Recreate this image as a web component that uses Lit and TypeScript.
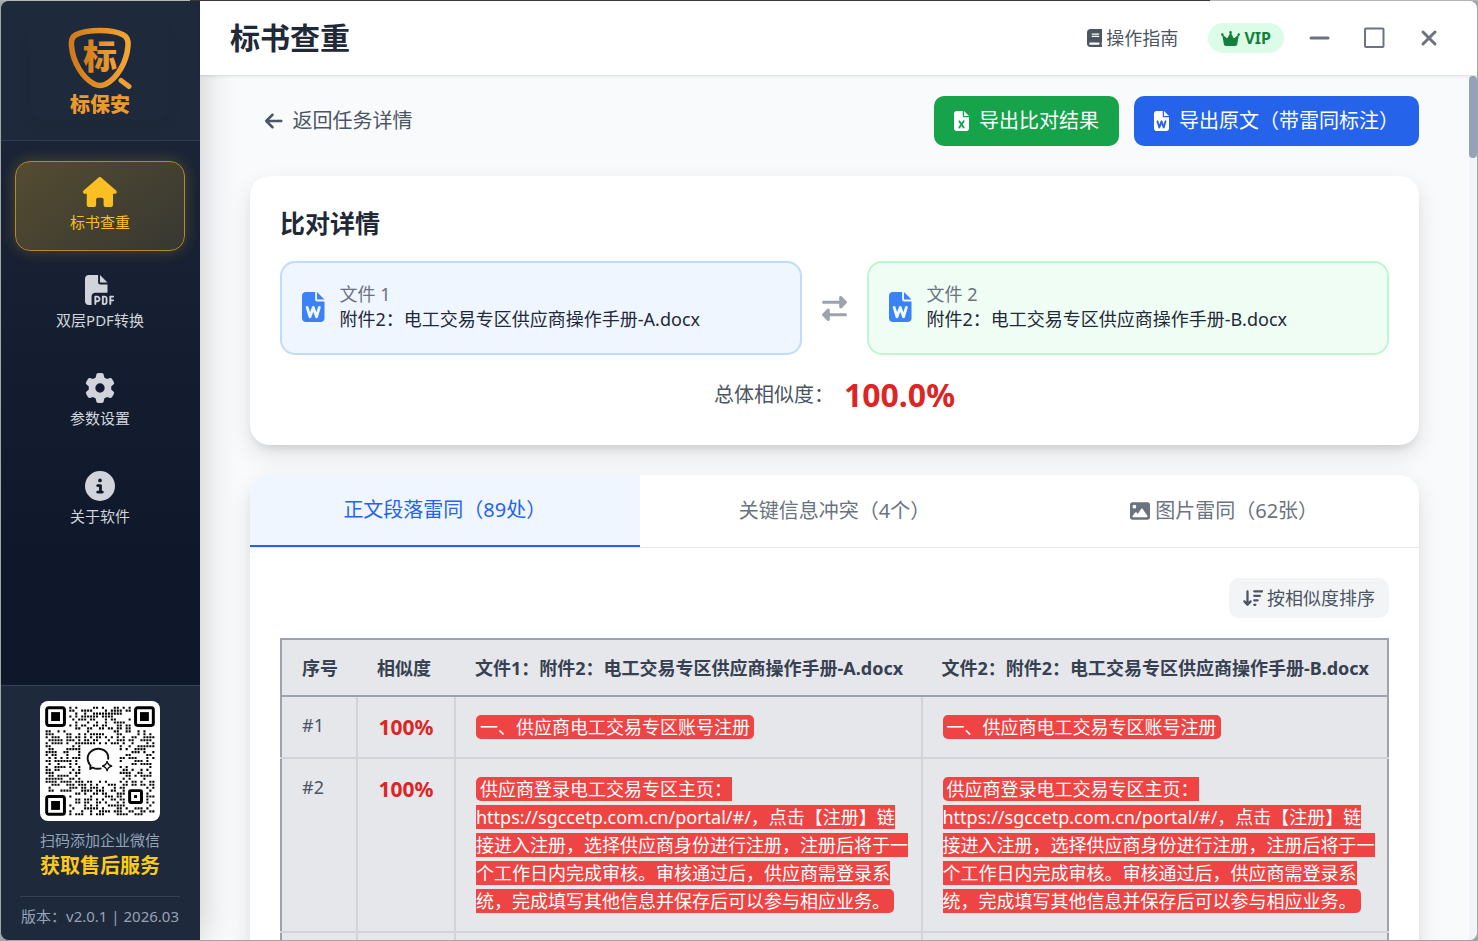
import { LitElement, html, css, svg } from "lit";
import { customElement, state } from "lit/decorators.js";

interface Glyph {
  box: string;
  d: string;
}

const FILE_BASE =
  "M64 0C28.7 0 0 28.7 0 64V448c0 35.3 28.7 64 64 64H320c35.3 0 64-28.7 64-64V160H256c-17.7 0-32-14.3-32-32V0H64zM256 0V128H384L256 0z";

const ICONS: Record<string, Glyph> = {
  home: {
    box: "0 0 576 512",
    d: "M575.8 255.5c0 18-15 32.1-32 32.1h-32l.7 160.2c0 2.7-.2 5.4-.5 8.1V472c0 22.1-17.9 40-40 40H456c-1.1 0-2.2 0-3.3-.1c-1.4 .1-2.8 .1-4.2 .1H416 392c-22.1 0-40-17.9-40-40V448 384c0-17.7-14.3-32-32-32H256c-17.7 0-32 14.3-32 32v64 24c0 22.1-17.9 40-40 40H160 128.1c-1.5 0-3-.1-4.5-.2c-1.2 .1-2.4 .2-3.6 .2H104c-22.1 0-40-17.9-40-40V360c0-.9 0-1.9 .1-2.8V287.6H32c-18 0-32-14-32-32.1c0-9 3-17 10-24L266.4 8c7-7 15-8 22-8s15 2 21 7L564.8 231.5c8 7 12 15 11 24z",
  },
  pdf: {
    box: "0 0 512 512",
    d: "M0 64C0 28.7 28.7 0 64 0H224V128c0 17.7 14.3 32 32 32H384V304H176c-35.3 0-64 28.7-64 64V512H64c-35.3 0-64-28.7-64-64V64zm384 64H256V0L384 128zM176 352h32c30.9 0 56 25.1 56 56s-25.1 56-56 56H192v32c0 8.8-7.2 16-16 16s-16-7.2-16-16V448 368c0-8.8 7.2-16 16-16zm32 80c13.3 0 24-10.7 24-24s-10.7-24-24-24H192v48h16zm96-80h32c26.5 0 48 21.5 48 48v64c0 26.5-21.5 48-48 48H304c-8.8 0-16-7.2-16-16V368c0-8.8 7.2-16 16-16zm32 128c8.8 0 16-7.2 16-16V400c0-8.8-7.2-16-16-16H320v96h16zm80-112c0-8.8 7.2-16 16-16h48c8.8 0 16 7.2 16 16s-7.2 16-16 16H448v32h32c8.8 0 16 7.2 16 16s-7.2 16-16 16H448v48c0 8.8-7.2 16-16 16s-16-7.2-16-16V432 368z",
  },
  gear: {
    box: "0 0 512 512",
    d: "M495.9 166.6c3.2 8.7 .5 18.4-6.4 24.6l-43.3 39.4c1.1 8.3 1.7 16.8 1.7 25.4s-.6 17.1-1.7 25.4l43.3 39.4c6.9 6.2 9.6 15.9 6.4 24.6c-4.4 11.9-9.7 23.3-15.8 34.3l-4.7 8.1c-6.6 11-14 21.4-22.1 31.2c-5.9 7.2-15.7 9.6-24.5 6.8l-55.7-17.7c-13.4 10.3-28.2 18.9-44 25.4l-12.5 57.1c-2 9.1-9 16.3-18.2 17.8c-13.8 2.3-28 3.5-42.5 3.5s-28.7-1.2-42.5-3.5c-9.2-1.5-16.2-8.7-18.2-17.8l-12.5-57.1c-15.8-6.5-30.6-15.1-44-25.4L83.1 425.9c-8.8 2.8-18.6 .3-24.5-6.8c-8.1-9.8-15.5-20.2-22.1-31.2l-4.7-8.1c-6.1-11-11.4-22.4-15.8-34.3c-3.2-8.7-.5-18.4 6.4-24.6l43.3-39.4C64.6 273.1 64 264.6 64 256s.6-17.1 1.7-25.4L22.4 191.2c-6.9-6.2-9.6-15.9-6.4-24.6c4.4-11.9 9.7-23.3 15.8-34.3l4.7-8.1c6.6-11 14-21.4 22.1-31.2c5.9-7.2 15.7-9.6 24.5-6.8l55.7 17.7c13.4-10.3 28.2-18.9 44-25.4l12.5-57.1c2-9.1 9-16.3 18.2-17.8C227.3 1.2 241.5 0 256 0s28.7 1.2 42.5 3.5c9.2 1.5 16.2 8.7 18.2 17.8l12.5 57.1c15.8 6.5 30.6 15.1 44 25.4l55.7-17.7c8.8-2.8 18.6-.3 24.5 6.8c8.1 9.8 15.5 20.2 22.1 31.2l4.7 8.1c6.1 11 11.4 22.4 15.8 34.3zM256 336a80 80 0 1 0 0-160 80 80 0 1 0 0 160z",
  },
  info: {
    box: "0 0 512 512",
    d: "M256 512A256 256 0 1 0 256 0a256 256 0 1 0 0 512zM216 336h24V272H216c-13.3 0-24-10.7-24-24s10.7-24 24-24h48c13.3 0 24 10.7 24 24v88h8c13.3 0 24 10.7 24 24s-10.7 24-24 24H216c-13.3 0-24-10.7-24-24s10.7-24 24-24zm40-208a32 32 0 1 1 0 64 32 32 0 1 1 0-64z",
  },
  book: {
    box: "0 0 448 512",
    d: "M96 0C43 0 0 43 0 96V416c0 53 43 96 96 96H384h32c17.7 0 32-14.3 32-32s-14.3-32-32-32V384c17.7 0 32-14.3 32-32V32c0-17.7-14.3-32-32-32H384 96zm0 384H352v64H96c-17.7 0-32-14.3-32-32s14.3-32 32-32zm32-240c0-8.8 7.2-16 16-16H336c8.8 0 16 7.2 16 16s-7.2 16-16 16H144c-8.8 0-16-7.2-16-16zm16 48H336c8.8 0 16 7.2 16 16s-7.2 16-16 16H144c-8.8 0-16-7.2-16-16s7.2-16 16-16z",
  },
  crown: {
    box: "0 0 576 512",
    d: "M309 106c11.4-7 19-19.7 19-34c0-22.1-17.9-40-40-40s-40 17.9-40 40c0 14.4 7.6 27 19 34L209.7 220.6c-9.1 18.2-32.7 23.4-48.6 10.7L72 160c5-6.7 8-15 8-24c0-22.1-17.9-40-40-40S0 113.9 0 136s17.9 40 40 40c.2 0 .5 0 .7 0L86.4 427.4c5.5 30.4 32 52.6 63 52.6H426.6c30.9 0 57.4-22.1 63-52.6L535.3 176c.2 0 .5 0 .7 0c22.1 0 40-17.9 40-40s-17.9-40-40-40s-40 17.9-40 40c0 9 3 17.3 8 24l-89.1 71.3c-15.9 12.7-39.5 7.5-48.6-10.7L309 106z",
  },
  back: {
    box: "0 0 448 512",
    d: "M9.4 233.4c-12.5 12.5-12.5 32.8 0 45.3l160 160c12.5 12.5 32.8 12.5 45.3 0s12.5-32.8 0-45.3L109.2 288 416 288c17.7 0 32-14.3 32-32s-14.3-32-32-32l-306.7 0L214.6 118.6c12.5-12.5 12.5-32.8 0-45.3s-32.8-12.5-45.3 0l-160 160z",
  },
  word: {
    box: "0 0 384 512",
    d:
      FILE_BASE +
      "M111 257.1l26.8 89.2 31.6-90.3c3.4-9.6 12.5-16.1 22.7-16.1s19.3 6.4 22.7 16.1l31.6 90.3L273 257.1c3.8-12.7 17.2-19.9 29.9-16.1s19.9 17.2 16.1 29.9l-48 160c-3 10-12 16.9-22.4 17.1s-19.8-6.2-23.2-16.1L192 336.6l-33.3 95.3c-3.4 9.8-12.8 16.3-23.2 16.1s-19.5-7.1-22.4-17.1l-48-160c-3.8-12.7 3.4-26.1 16.1-29.9s26.1 3.4 29.9 16.1z",
  },
  excel: {
    box: "0 0 384 512",
    d:
      FILE_BASE +
      "M155.7 250.2L192 302.1l36.3-51.9c7.6-10.9 22.6-13.5 33.4-5.9s13.5 22.6 5.9 33.4L221.3 344l46.4 66.2c7.6 10.9 5 25.8-5.9 33.4s-25.8 5-33.4-5.9L192 385.8l-36.3 51.9c-7.6 10.9-22.6 13.5-33.4 5.9s-13.5-22.6-5.9-33.4L162.7 344l-46.4-66.2c-7.6-10.9-5-25.8 5.9-33.4s25.8-5 33.4 5.9z",
  },
  swap: {
    box: "0 0 512 512",
    d: "M32 96l320 0V32c0-12.9 7.8-24.6 19.8-29.6s25.7-2.2 34.9 6.9l96 96c6 6 9.4 14.1 9.4 22.6s-3.4 16.6-9.4 22.6l-96 96c-9.2 9.2-22.9 11.9-34.9 6.9s-19.8-16.6-19.8-29.6V160L32 160c-17.7 0-32-14.3-32-32s14.3-32 32-32zM480 352c17.7 0 32 14.3 32 32s-14.3 32-32 32H160v64c0 12.9-7.8 24.6-19.8 29.6s-25.7 2.2-34.9-6.9l-96-96c-6-6-9.4-14.1-9.4-22.6s3.4-16.6 9.4-22.6l96-96c9.2-9.2 22.9-11.9 34.9-6.9s19.8 16.6 19.8 29.6l0 64H480z",
  },
  image: {
    box: "0 0 512 512",
    d: "M0 96C0 60.7 28.7 32 64 32H448c35.3 0 64 28.7 64 64V416c0 35.3-28.7 64-64 64H64c-35.3 0-64-28.7-64-64V96zM323.8 202.5c-4.5-6.6-11.9-10.5-19.8-10.5s-15.4 3.9-19.8 10.5l-87 127.6L170.7 297c-4.6-5.7-11.5-9-18.7-9s-14.2 3.3-18.7 9l-64 80c-5.8 7.2-6.9 17.1-2.9 25.4s12.4 13.6 21.6 13.6h96 32H424c8.9 0 17.1-4.9 21.2-12.8s3.6-17.4-1.4-24.7l-120-176zM112 192a48 48 0 1 0 0-96 48 48 0 1 0 0 96z",
  },
  sort: {
    box: "0 0 576 512",
    d: "M151.6 469.6C145.5 476.2 137 480 128 480s-17.5-3.8-23.6-10.4l-88-96c-11.9-13-11.1-33.3 2-45.2s33.3-11.1 45.2 2L96 365.7V64c0-17.7 14.3-32 32-32s32 14.3 32 32V365.7l32.4-35.4c11.9-13 32.2-13.9 45.2-2s13.9 32.2 2 45.2l-88 96zM320 480c-17.7 0-32-14.3-32-32s14.3-32 32-32h32c17.7 0 32 14.3 32 32s-14.3 32-32 32H320zm0-128c-17.7 0-32-14.3-32-32s14.3-32 32-32h96c17.7 0 32 14.3 32 32s-14.3 32-32 32H320zm0-128c-17.7 0-32-14.3-32-32s14.3-32 32-32H480c17.7 0 32 14.3 32 32s-14.3 32-32 32H320zm0-128c-17.7 0-32-14.3-32-32s14.3-32 32-32H544c17.7 0 32 14.3 32 32s-14.3 32-32 32H320z",
  },
};

const icon = (name: string, size: string) =>
  html`<svg class="icon ${size}" viewBox=${ICONS[name].box} aria-hidden="true"><path d=${ICONS[name].d}></path></svg>`;

const NAV = [
  { id: "check", icon: "home", label: "标书查重" },
  { id: "pdf", icon: "pdf", label: "双层PDF转换" },
  { id: "settings", icon: "gear", label: "参数设置" },
  { id: "about", icon: "info", label: "关于软件" },
];

const TABS = [
  { id: "text", icon: "", label: "正文段落雷同（89处）" },
  { id: "keys", icon: "", label: "关键信息冲突（4个）" },
  { id: "images", icon: "image", label: "图片雷同（62张）" },
];

const FILE_A = "附件2：电工交易专区供应商操作手册-A.docx";
const FILE_B = "附件2：电工交易专区供应商操作手册-B.docx";

const ROWS = [
  { no: "#1", score: "100%", text: "一、供应商电工交易专区账号注册" },
  {
    no: "#2",
    score: "100%",
    text: "供应商登录电工交易专区主页：https://sgccetp.com.cn/portal/#/，点击【注册】链接进入注册，选择供应商身份进行注册，注册后将于一个工作日内完成审核。审核通过后，供应商需登录系统，完成填写其他信息并保存后可以参与相应业务。",
  },
];

/* Module grid of the contact code: 37 x 37, finders in three corners, logo area left free. */
const QR_SIZE = 37;
const inBox = (x: number, y: number, x0: number, y0: number, x1: number, y1: number) =>
  x >= x0 && x <= x1 && y >= y0 && y <= y1;

const qrDots = () => {
  let seed = 20260301;
  const dots: string[] = [];
  for (let y = 0; y < QR_SIZE; y++) {
    for (let x = 0; x < QR_SIZE; x++) {
      seed = (seed * 1103515245 + 12345) % 2147483648;
      const on = (seed >> 12) % 100 < 50;
      const reserved =
        inBox(x, y, 0, 0, 7, 7) ||
        inBox(x, y, 29, 0, 36, 7) ||
        inBox(x, y, 0, 29, 7, 36) ||
        inBox(x, y, 27, 27, 33, 33) ||
        inBox(x, y, 12, 13, 24, 24);
      if (on && !reserved) dots.push(`M${x + 0.15} ${y + 0.15}h.7v.7h-.7z`);
    }
  }
  return dots.join("");
};
const QR_DOTS = qrDots();

const finder = (x: number, y: number) => svg`
  <rect x=${x + 0.5} y=${y + 0.5} width="6" height="6" rx="0.7" fill="none" stroke="#000"></rect>
  <rect x=${x + 2} y=${y + 2} width="3" height="3"></rect>`;

@customElement("app-root")
export class AppRoot extends LitElement {
  @state() private page = "check";
  @state() private tab = "text";

  static styles = css`
    :host {
      display: block;
      height: 100vh;
      font-family: "Noto Sans", "Noto Sans CJK SC", sans-serif;
      font-size: 20px;
      line-height: 30px;
      color: #1f2937;
    }
    * {
      box-sizing: border-box;
    }
    button {
      font: inherit;
      color: inherit;
      background: none;
      border: 0;
      padding: 0;
      cursor: pointer;
    }
    h1,
    h2,
    p {
      margin: 0;
    }
    .icon {
      display: block;
      flex: none;
      fill: currentColor;
      width: auto;
    }
    .s17 { height: 17px; }
    .s18 { height: 18px; }
    .s20 { height: 20px; }
    .s25 { height: 25px; }
    .s30 { height: 30px; }

    .desktop {
      height: 100%;
      padding: 1px;
      background: linear-gradient(90deg, #b4b7b3 190px, #3a3838 190px, #3a3838 1210px, #b4b4b4 1210px) top / 100% 1px no-repeat, #a3a6a8;
    }
    .window {
      height: 100%;
      display: flex;
      border-radius: 8px;
      overflow: hidden;
      background: #f8fafc;
    }

    .sidebar {
      flex: none;
      width: 199px;
      display: flex;
      flex-direction: column;
      background: linear-gradient(180deg, #1e293b 0%, #0f172a 60%, #0f172a 100%);
      box-shadow: 5px 0 30px rgba(0, 0, 0, 0.16);
      z-index: 1;
    }
    .brand {
      height: 140px;
      padding: 19px 31px 20px 29px;
      background: #1e293b;
      border-bottom: 1px solid #2f3d50;
    }
    .brand-box {
      height: 100px;
      display: flex;
      justify-content: center;
      border-radius: 15px;
      box-shadow: 0 8px 14px rgba(0, 0, 0, 0.06);
    }
    .brand svg {
      width: 80px;
      height: 100px;
    }
    .brand text {
      font-weight: 900;
      text-anchor: middle;
    }
    .nav {
      flex: 1;
      display: flex;
      flex-direction: column;
      gap: 8px;
      padding: 20px 15px 20px 14px;
    }
    .nav-item {
      height: 90px;
      display: flex;
      flex-direction: column;
      align-items: center;
      padding: 15px 0;
      gap: 5px;
      border: 1px solid transparent;
      border-radius: 15px;
      font-size: 15px;
      line-height: 20px;
      color: #d1d5db;
    }
    .nav-item.active {
      color: #fbbf24;
      border-color: #b1882a;
      background: linear-gradient(135deg, rgba(251, 191, 36, 0.26), rgba(251, 191, 36, 0.14));
      box-shadow: 0 0 15px rgba(251, 191, 36, 0.24);
    }
    .contact {
      display: flex;
      flex-direction: column;
      align-items: center;
      padding: 15px 20px 13px 19px;
      background: #1e293b;
      border-top: 1px solid #334155;
      font-size: 15px;
      line-height: 22px;
      color: #94a3b8;
      text-align: center;
    }
    .qr {
      width: 120px;
      height: 120px;
      padding: 4px;
      border-radius: 8px;
      background: #fff;
      margin-bottom: 8px;
    }
    .qr svg {
      display: block;
      width: 100%;
      height: 100%;
    }
    .service {
      font-size: 20px;
      line-height: 30px;
      font-weight: 700;
      color: #facc15;
      margin-bottom: 15px;
    }
    .version {
      align-self: stretch;
      border-top: 1px solid #334155;
      padding-top: 8px;
      white-space: nowrap;
    }

    .main {
      flex: 1;
      min-width: 0;
      display: flex;
      flex-direction: column;
    }
    .topbar {
      flex: none;
      height: 74px;
      display: flex;
      align-items: center;
      padding: 0 31px 0 30px;
      background: #fff;
      box-shadow: 0 1px 3px rgba(0, 0, 0, 0.12);
      z-index: 2;
    }
    .topbar h1 {
      flex: 1;
      font-size: 30px;
      line-height: 40px;
      font-weight: 700;
    }
    .guide {
      display: flex;
      align-items: center;
      gap: 4px;
      font-size: 18px;
      color: #4b5563;
      text-decoration: none;
    }
    .vip {
      display: flex;
      align-items: center;
      gap: 4px;
      height: 30px;
      margin: 0 17px 0 30px;
      padding: 0 13px;
      border-radius: 15px;
      background: #dcfce7;
      color: #15803d;
      font-size: 16px;
      font-weight: 700;
    }
    .win-controls {
      display: flex;
      gap: 20px;
    }
    .win-controls button {
      width: 35px;
      height: 35px;
      display: grid;
      place-items: center;
    }
    .win-controls svg {
      width: 24px;
      height: 24px;
      fill: none;
      stroke: #6b7280;
      stroke-linecap: round;
    }

    .body {
      flex: 1;
      min-height: 0;
      display: flex;
    }
    .scroll {
      flex: 1;
      min-width: 0;
      overflow: hidden;
      display: flex;
      flex-direction: column;
      gap: 30px;
      padding: 21px 50px 0;
    }
    .scroll > * {
      flex: none;
    }
    .track {
      width: 8px;
      padding-top: 1px;
      background: #f1f5f9;
    }
    .thumb {
      height: 82px;
      border-radius: 5px;
      background: #94a3b8;
    }

    .actions {
      display: flex;
      align-items: center;
      gap: 15px;
    }
    .back {
      display: flex;
      align-items: center;
      gap: 10px;
      margin-right: auto;
      padding: 10px 15px;
      color: #4b5563;
    }
    .export {
      display: flex;
      align-items: center;
      gap: 10px;
      height: 50px;
      padding: 0 20px;
      border-radius: 10px;
      color: #fff;
      white-space: nowrap;
    }
    .export.green {
      background: #16a34a;
    }
    .export.blue {
      background: #2563eb;
    }

    .card {
      border-radius: 20px;
      background: #fff;
      box-shadow: 0 10px 25px rgba(0, 0, 0, 0.1), 0 6px 10px -4px rgba(0, 0, 0, 0.12);
    }
    .summary {
      padding: 30px;
    }
    .summary h2 {
      font-size: 25px;
      line-height: 35px;
      font-weight: 700;
      margin-bottom: 20px;
    }
    .pair {
      display: grid;
      grid-template-columns: 1fr auto 1fr;
      align-items: center;
      gap: 20px;
      margin-bottom: 20px;
    }
    .pair > .icon {
      color: #9ca3af;
    }
    .file {
      display: flex;
      align-items: center;
      gap: 15px;
      min-width: 0;
      padding: 19px 20px 21px;
      border: 2px solid #bfdbfe;
      border-radius: 15px;
      background: #eff6ff;
      font-size: 18px;
      line-height: 25px;
    }
    .file.second {
      border-color: #bbf7d0;
      background: #f0fdf4;
    }
    .file .icon {
      color: #3b82f6;
    }
    .file-label {
      color: #6b7280;
    }
    .overall {
      display: flex;
      justify-content: center;
      align-items: center;
      gap: 10px;
      color: #4b5563;
      line-height: 40px;
    }
    .overall strong {
      font-size: 32px;
      color: #dc2626;
    }

    .details {
      overflow: hidden;
    }
    .tabs {
      display: grid;
      grid-template-columns: repeat(3, 1fr);
      border-bottom: 1px solid #e5e7eb;
    }
    .tab {
      display: flex;
      align-items: center;
      justify-content: center;
      gap: 5px;
      height: 72px;
      color: #6b7280;
    }
    .tab.active {
      color: #2563eb;
      background: #eff6ff;
      border-bottom: 2px solid #2563eb;
    }
    .panel {
      display: flex;
      flex-direction: column;
      gap: 20px;
      padding: 30px;
    }
    .sort {
      align-self: flex-end;
      display: flex;
      align-items: center;
      gap: 4px;
      height: 40px;
      padding: 0 14px;
      border-radius: 10px;
      background: #f3f4f6;
      color: #4b5563;
      font-size: 18px;
    }
    table {
      width: 100%;
      table-layout: fixed;
      border-collapse: collapse;
      border: 2px solid #9ca3af;
      background: #e5e7eb;
      font-size: 18px;
      line-height: 24px;
    }
    .col-no {
      width: 76px;
    }
    .col-score {
      width: 98px;
    }
    th {
      padding: 16px 0 15px 20px;
      text-align: left;
      font-weight: 700;
      color: #374151;
      white-space: nowrap;
      border-bottom: 2px solid #9ca3af;
    }
    td {
      padding: 16px 10px 16px 20px;
      vertical-align: top;
      border-bottom: 2px solid #d1d5db;
      border-right: 2px solid #d1d5db;
    }
    td:last-child {
      border-right-color: #9ca3af;
    }
    .no {
      color: #4b5563;
    }
    .score {
      padding: 16px 0;
      text-align: center;
      font-size: 21px;
      line-height: 28px;
      font-weight: 700;
      color: #dc2626;
    }
    .para {
      line-height: 28px;
    }
    .mark {
      padding: 0 4px;
      border-radius: 5px;
      background: #ef4444;
      color: #fff;
    }
  `;

  private logo() {
    return html`<svg viewBox="0 0 80 100" role="img" aria-label="标保安">
      <defs>
        <linearGradient id="gold" x1="0" y1="0" x2="1" y2="0">
          <stop offset="0" stop-color="#cf7a1c"></stop>
          <stop offset="1" stop-color="#f2a533"></stop>
        </linearGradient>
      </defs>
      <path
        d="M40 10.500C50 10.500 58 12 63.500 15C67 17 68.500 21 68 26C66.500 43 57 58 46 64C42 66 38 66 34 64C23 58 13 43 11.500 26C11 21 12 17 15.500 15C21 12 30 10.500 40 10.500Z"
        fill="none" stroke="url(#gold)" stroke-width="5.500"></path>
      <path d="M61 60.500L69 66.500" stroke="#eda033" stroke-width="5" stroke-linecap="round"></path>
      <text x="40" y="49" font-size="34" fill="url(#gold)">标</text>
      <text x="40" y="92" font-size="20" fill="#eb9a2e">标保安</text>
    </svg>`;
  }

  private qr() {
    return html`<svg viewBox="-0.400 -0.400 37.800 37.800" role="img" aria-label="企业微信">
      <path d=${QR_DOTS}></path>
      ${finder(0, 0)} ${finder(30, 0)} ${finder(0, 30)}
      <rect x="28.500" y="28.500" width="4" height="4" rx="0.300" fill="none" stroke="#000"></rect>
      <rect x="30" y="30" width="1" height="1"></rect>
      <path d="M19 21C17.800 21.300 16.800 21.100 16 20.700L15.200 21.200L15.300 20C13.900 18.500 14 16.300 15.700 15.100C17.800 13.700 20.600 14.500 21.200 16.600C21.300 17 21.300 17.500 21.200 18"
        fill="none" stroke="#111" stroke-width="0.650" stroke-linejoin="round"></path>
      <path d="M20.900 18.500Q21.100 20 22.600 20.200Q21.100 20.400 20.900 21.900Q20.700 20.400 19.200 20.200Q20.700 20 20.900 18.500Z"
        fill="none" stroke="#111" stroke-width="0.450"></path>
    </svg>`;
  }

  private sidebar() {
    return html`<aside class="sidebar">
      <div class="brand"><div class="brand-box">${this.logo()}</div></div>
      <nav class="nav">
        ${NAV.map(
          (item) => html`<button
            class="nav-item ${this.page === item.id ? "active" : ""}"
            @click=${() => (this.page = item.id)}
          >
            ${icon(item.icon, "s30")}<span>${item.label}</span>
          </button>`
        )}
      </nav>
      <footer class="contact">
        <div class="qr">${this.qr()}</div>
        <p>扫码添加企业微信</p>
        <p class="service">获取售后服务</p>
        <p class="version">版本：v2.0.1 | 2026.03</p>
      </footer>
    </aside>`;
  }

  private topbar() {
    return html`<header class="topbar">
      <h1>标书查重</h1>
      <a class="guide" href="#guide">${icon("book", "s18")}<span>操作指南</span></a>
      <span class="vip">${icon("crown", "s17")}<span>VIP</span></span>
      <div class="win-controls">
        <button aria-label="最小化">
          <svg viewBox="0 0 24 24"><path d="M4 12H21" stroke-width="3"></path></svg>
        </button>
        <button aria-label="最大化">
          <svg viewBox="0 0 24 24"><rect x="3" y="2.500" width="18.500" height="18.500" rx="1" stroke-width="2"></rect></svg>
        </button>
        <button aria-label="关闭">
          <svg viewBox="0 0 24 24"><path d="M6 6L18 18M18 6L6 18" stroke-width="3"></path></svg>
        </button>
      </div>
    </header>`;
  }

  private summary() {
    return html`<section class="card summary">
      <h2>比对详情</h2>
      <div class="pair">
        <div class="file">
          ${icon("word", "s30")}
          <div><p class="file-label">文件 1</p><p>${FILE_A}</p></div>
        </div>
        ${icon("swap", "s25")}
        <div class="file second">
          ${icon("word", "s30")}
          <div><p class="file-label">文件 2</p><p>${FILE_B}</p></div>
        </div>
      </div>
      <div class="overall"><span>总体相似度：</span><strong>100.0%</strong></div>
    </section>`;
  }

  private table() {
    return html`<table>
      <colgroup>
        <col class="col-no" />
        <col class="col-score" />
        <col />
        <col />
      </colgroup>
      <thead>
        <tr>
          <th>序号</th>
          <th>相似度</th>
          <th>文件1：${FILE_A}</th>
          <th>文件2：${FILE_B}</th>
        </tr>
      </thead>
      <tbody>
        ${ROWS.map(
          (row) => html`<tr>
            <td class="no">${row.no}</td>
            <td class="score">${row.score}</td>
            <td class="para"><span class="mark">${row.text}</span></td>
            <td class="para"><span class="mark">${row.text}</span></td>
          </tr>`
        )}
        <tr>
          <td></td>
          <td></td>
          <td></td>
          <td></td>
        </tr>
      </tbody>
    </table>`;
  }

  render() {
    return html`<div class="desktop">
      <div class="window">
        ${this.sidebar()}
        <div class="main">
          ${this.topbar()}
          <div class="body">
            <main class="scroll">
              <div class="actions">
                <button class="back">${icon("back", "s20")}<span>返回任务详情</span></button>
                <button class="export green">${icon("excel", "s20")}<span>导出比对结果</span></button>
                <button class="export blue">${icon("word", "s20")}<span>导出原文（带雷同标注）</span></button>
              </div>
              ${this.summary()}
              <section class="card details">
                <div class="tabs" role="tablist">
                  ${TABS.map(
                    (tab) => html`<button
                      role="tab"
                      aria-selected=${this.tab === tab.id}
                      class="tab ${this.tab === tab.id ? "active" : ""}"
                      @click=${() => (this.tab = tab.id)}
                    >
                      ${tab.icon ? icon(tab.icon, "s20") : ""}<span>${tab.label}</span>
                    </button>`
                  )}
                </div>
                <div class="panel">
                  <button class="sort">${icon("sort", "s18")}<span>按相似度排序</span></button>
                  ${this.table()}
                </div>
              </section>
            </main>
            <div class="track"><div class="thumb"></div></div>
          </div>
        </div>
      </div>
    </div>`;
  }
}
